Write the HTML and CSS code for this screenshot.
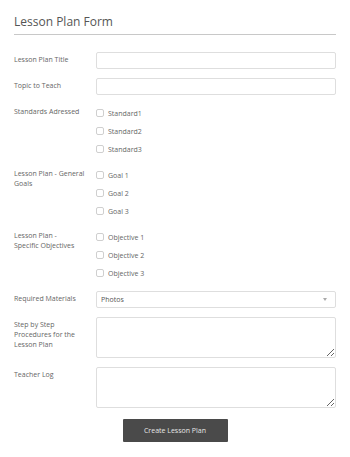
FILE: index.html
```html
<!DOCTYPE html>
<html lang="en">
<head>
    <meta charset="UTF-8">
    <meta name="viewport" content="width=device-width, initial-scale=1.0">
    <title>Lesson Plan Form</title>
    <link rel="stylesheet" href="styles.css">
</head>
<body>
    <div class="form">
        <div class="form-header">
            <h1>Lesson Plan Form</h1>
        </div>

        <div class="row">
            <label class="row-label">Lesson Plan Title</label>
            <input type="text" class="text-input">
        </div>

        <div class="row">
            <label class="row-label">Topic to Teach</label>
            <input type="text" class="text-input">
        </div>

        <div class="row row-options">
            <label class="row-label">Standards Adressed</label>
            <div class="options">
                <label class="option"><input type="checkbox"> Standard1</label>
                <label class="option"><input type="checkbox"> Standard2</label>
                <label class="option"><input type="checkbox"> Standard3</label>
            </div>
        </div>

        <div class="row row-options">
            <label class="row-label">Lesson Plan - General Goals</label>
            <div class="options">
                <label class="option"><input type="checkbox"> Goal 1</label>
                <label class="option"><input type="checkbox"> Goal 2</label>
                <label class="option"><input type="checkbox"> Goal 3</label>
            </div>
        </div>

        <div class="row row-options row-options-last">
            <label class="row-label">Lesson Plan -<br>Specific Objectives</label>
            <div class="options">
                <label class="option"><input type="checkbox"> Objective 1</label>
                <label class="option"><input type="checkbox"> Objective 2</label>
                <label class="option"><input type="checkbox"> Objective 3</label>
            </div>
        </div>

        <div class="row">
            <label class="row-label">Required Materials</label>
            <div class="select">
                <span>Photos</span>
                <span class="arrow"></span>
            </div>
        </div>

        <div class="row">
            <label class="row-label">Step by Step Procedures for the Lesson Plan</label>
            <textarea class="text-area"></textarea>
        </div>

        <div class="row">
            <label class="row-label">Teacher Log</label>
            <textarea class="text-area"></textarea>
        </div>

        <div class="actions">
            <button class="submit">Create Lesson Plan</button>
        </div>
    </div>
</body>
</html>
```

FILE: styles.css
```css
* {
    margin: 0;
    padding: 0;
    box-sizing: border-box;
}

body {
    font-family: "Open Sans", "Liberation Sans", sans-serif;
    background: #fff;
    color: #666;
}

.form {
    padding: 14px 14px 0 14px;
}

.form-header {
    border-bottom: 1px solid #c8c8c8;
    padding-bottom: 4px;
    margin-bottom: 17px;
}

.form-header h1 {
    font-size: 12px;
    line-height: 16px;
    font-weight: 400;
    color: #555;
}

.row {
    display: flex;
    margin-bottom: 9px;
}

.row-options {
    margin-bottom: 8px;
}

.row-options-last {
    margin-bottom: 9px;
}

.row-label {
    flex: 0 0 82px;
    padding: 3px 6px 0 0;
    font-size: 7px;
    line-height: 10px;
    color: #666;
}

.text-input,
.select,
.text-area {
    flex: 1;
    border: 1px solid #dedede;
    border-radius: 2px;
    background: #fff;
    font-family: inherit;
}

.text-input {
    height: 17px;
}

.text-area {
    height: 41px;
}

.options {
    display: flex;
    flex-direction: column;
}

.option {
    display: flex;
    align-items: center;
    height: 18px;
    font-size: 7px;
    color: #666;
}

.option input {
    appearance: none;
    width: 8px;
    height: 8px;
    border: 1px solid #cfcfcf;
    border-radius: 2px;
    margin-right: 4px;
    background: #fff;
}

.select {
    height: 17px;
    display: flex;
    align-items: center;
    justify-content: space-between;
    padding: 0 8px 0 4px;
    font-size: 7px;
    color: #555;
}

.arrow {
    width: 0;
    height: 0;
    border-left: 2.5px solid transparent;
    border-right: 2.5px solid transparent;
    border-top: 3px solid #aaa;
}

.actions {
    display: flex;
    justify-content: center;
    margin-top: 11px;
}

.submit {
    width: 105px;
    height: 23px;
    background: #4a4a4a;
    border: none;
    border-radius: 1px;
    color: #e6e6e6;
    font-family: inherit;
    font-size: 7px;
}
```
